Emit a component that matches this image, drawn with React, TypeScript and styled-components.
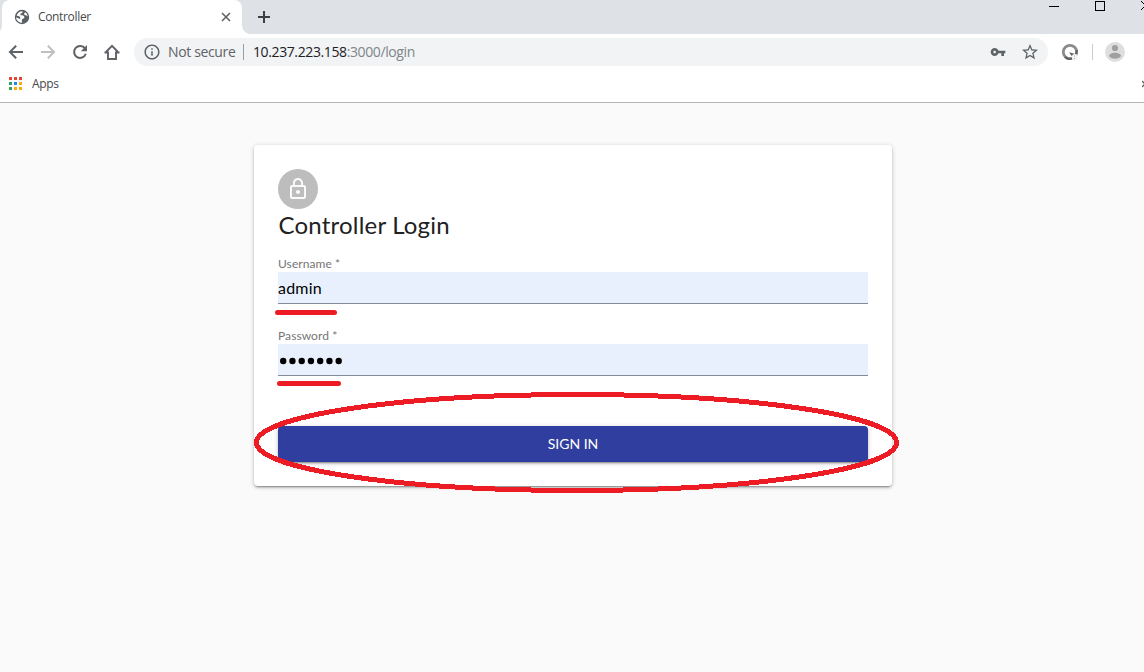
import React from 'react';
import styled, { createGlobalStyle, css } from 'styled-components';

const Global = createGlobalStyle`
  * { box-sizing: border-box; }
  html, body { margin: 0; padding: 0; overflow: hidden; background: #fafafa; }
`;

const Window = styled.div`
  position: relative;
  display: flex;
  flex-direction: column;
  width: 1144px;
  height: 672px;
  overflow: hidden;
  background: #fafafa;
  font-family: 'Open Sans', 'Noto Sans', sans-serif;
`;

const TabStrip = styled.div`
  display: flex;
  height: 34px;
  padding-left: 2px;
  background: #dee1e6;
`;

const Tab = styled.div`
  position: relative;
  display: flex;
  align-items: center;
  width: 240px;
  height: 34px;
  padding: 0 11px 0 12px;
  background: #fff;
  border-radius: 8px 8px 0 0;
  &::after, &::before {
    content: '';
    position: absolute;
    bottom: 0;
    width: 8px;
    height: 8px;
  }
  &::after { left: 100%; background: radial-gradient(circle at 100% 0, transparent 7.5px, #fff 8px); }
  &::before { right: 100%; background: radial-gradient(circle at 0 0, transparent 7.5px, #fff 8px); }
`;

const TabTitle = styled.span`
  flex: 1;
  margin-left: 8px;
  font-size: 12px;
  line-height: 16px;
  letter-spacing: -0.34px;
  color: #45494d;
`;

const NewTab = styled.div`
  display: flex;
  align-items: center;
  margin-left: 15px;
`;

const WindowButtons = styled.div`
  display: flex;
  align-items: flex-start;
  height: 12px;
  margin-left: auto;
`;

const Toolbar = styled.div`
  display: flex;
  align-items: center;
  height: 36px;
  padding-left: 8px;
  background: #fff;
`;

const NavButton = styled.div`
  display: flex;
  width: 16px;
  height: 16px;
  margin-right: 16px;
  &:nth-child(4) { margin-right: 14px; }
`;

const AddressBar = styled.div`
  display: flex;
  align-items: center;
  width: 914px;
  height: 28px;
  padding: 0 10px;
  border-radius: 14px;
  background: #f1f3f4;
`;

const Security = styled.span`
  width: 75px;
  margin-left: 8px;
  font-size: 14px;
  line-height: 20px;
  letter-spacing: -0.36px;
  white-space: nowrap;
  color: #5f6368;
`;

const Divider = styled.span<{ $color: string }>`
  width: 1px;
  height: 16px;
  background: ${(p) => p.$color};
`;

const Url = styled.span`
  flex: 1;
  margin-left: 9px;
  font-size: 14px;
  line-height: 20px;
  letter-spacing: -0.39px;
  color: #202124;
  span { color: #80868b; }
`;

const AddressIcons = styled.div`
  display: flex;
  gap: 16px;
`;

const Extensions = styled.div`
  display: flex;
  align-items: center;
  margin-left: 13px;
  gap: 12.5px;
`;

const Bookmarks = styled.div`
  display: flex;
  align-items: center;
  height: 33px;
  padding: 0 0 5px 9px;
  background: #fff;
  border-bottom: 1px solid #b6b4b6;
`;

const BookmarkLabel = styled.span`
  flex: 1;
  margin-left: 10px;
  font-size: 12px;
  line-height: 16px;
  letter-spacing: -0.3px;
  color: #45494d;
`;

const Page = styled.main`
  display: flex;
  flex: 1;
  justify-content: center;
  align-items: flex-start;
  padding: 42px 0 0 2px;
  font-family: Lato, sans-serif;
`;

const raised = css`
  box-shadow: 0 3px 1px -2px rgba(0, 0, 0, 0.2), 0 2px 2px rgba(0, 0, 0, 0.14), 0 1px 5px rgba(0, 0, 0, 0.2);
`;

const Card = styled.section`
  width: 638px;
  height: 341px;
  padding: 24px;
  background: #fff;
  border-radius: 4px;
  ${raised}
`;

const Avatar = styled.div`
  display: flex;
  align-items: center;
  justify-content: center;
  width: 40px;
  height: 40px;
  border-radius: 50%;
  background: #bdbdbd;
`;

const Title = styled.h1`
  margin: 0;
  padding-left: 0.5px;
  font-size: 24px;
  font-weight: 400;
  line-height: 32px;
  letter-spacing: 0.2px;
  color: #212121;
`;

const Field = styled.div`
  height: 48px;
  margin: 15px 0 24px;
  & + & { margin-top: 0; }
`;

const Label = styled.label`
  display: block;
  height: 16px;
  font-size: 12px;
  line-height: 15px;
  letter-spacing: 0.08px;
  color: #757575;
`;

const Value = styled.div`
  display: flex;
  align-items: center;
  height: 32px;
  padding: 1px 0 0;
  border-bottom: 1px solid #858b98;
  background: #e8f0fe;
  font-size: 16px;
  line-height: 20px;
  letter-spacing: 0.2px;
  color: #000;
`;

const Dots = styled.svg`
  margin-top: 2px;
`;

const SignIn = styled.button`
  display: block;
  width: 100%;
  height: 36px;
  margin-top: 50px;
  padding: 0;
  border: 0;
  border-radius: 4px;
  background: #303f9f;
  font: 400 14px/24px Lato, sans-serif;
  color: #fff;
  ${raised}
`;

const Markup = styled.svg`
  position: absolute;
  inset: 0;
  pointer-events: none;
`;

const Icon = ({ d, size = 16, color = '#5f6368', box = '0 0 24 24' }: { d: string; size?: number; color?: string; box?: string }) => (
  <svg width={size} height={size} viewBox={box} fill={color}><path d={d} /></svg>
);

const BACK = 'M22.500 10.500v3H6.500l6.800 6.800-2.100 2.100L.8 12 11.200 1.600l2.100 2.100-6.800 6.800z';
const FORWARD = 'M1.500 10.500v3h16l-6.800 6.800 2.100 2.100L23.200 12 12.800 1.600l-2.100 2.100 6.800 6.800z';
const INFO = 'M11 7h2v2h-2zm0 4h2v6h-2zm1-9C6.48 2 2 6.48 2 12s4.48 10 10 10 10-4.48 10-10S17.52 2 12 2zm0 18c-4.41 0-8-3.59-8-8s3.59-8 8-8 8 3.59 8 8-3.59 8-8 8z';
const KEY = 'M12.65 10C11.83 7.67 9.61 6 7 6c-3.31 0-6 2.69-6 6s2.69 6 6 6c2.61 0 4.83-1.67 5.65-4H17v4h4v-4h2v-4H12.65zM7 14c-1.1 0-2-.9-2-2s.9-2 2-2 2 .9 2 2-.9 2-2 2z';
const STAR = 'M22 9.24l-7.19-.62L12 2 9.19 8.63 2 9.24l5.46 4.73L5.82 21 12 17.27 18.18 21l-1.63-7.03L22 9.24zM12 15.4l-3.76 2.27 1-4.28-3.32-2.88 4.38-.38L12 6.1l1.71 4.04 4.38.38-3.32 2.88 1 4.28L12 15.4z';
const LOCK = 'M12 17c1.1 0 2-.9 2-2s-.9-2-2-2-2 .9-2 2 .9 2 2 2zm6-9h-1V6c0-2.76-2.24-5-5-5S7 3.24 7 6v2H6c-1.1 0-2 .9-2 2v10c0 1.1.9 2 2 2h12c1.1 0 2-.9 2-2V10c0-1.1-.9-2-2-2zM8.9 6c0-1.71 1.39-3.1 3.1-3.1s3.1 1.39 3.1 3.1v2H8.9V6zM18 20H6V10h12v10z';

const Globe = () => (
  <svg width="16" height="16" viewBox="0 0 16 16">
    <circle cx="8" cy="8" r="7.2" fill="#5a5f64" />
    <path d="M8.600 2.200 8.300 3.900 6.600 4.600 6.300 6.300h2.600l1.500 1.500-.2 1.500-1.600.4-.9 1.600.5 2.400C4.800 13.700 2.200 11.300 2.100 8.200l3.700 1.700.7-1-.9-1.400-3-.9C3.300 4 5.500 2.100 8.600 2.200z" fill="#fff" />
    <path d="M11.200 3.200 10 4.800l.6 1.200 2 .5 1 .9c0-1.700-.8-3.200-2.400-4.200z" fill="#fff" />
  </svg>
);

const APP_COLORS = ['#ea4335', '#ea4335', '#ea4335', '#34a060', '#1a88f5', '#fbab07', '#34a060', '#fbab07', '#fbab07'];

const AppsIcon = () => (
  <svg width="13" height="13" shapeRendering="crispEdges">
    {APP_COLORS.map((c, i) => <rect key={i} x={(i % 3) * 5} y={Math.floor(i / 3) * 5} width="3" height="3" fill={c} />)}
  </svg>
);

export default function App() {
  return (
    <Window>
      <Global />
      <TabStrip>
        <Tab>
          <Globe />
          <TabTitle>Controller</TabTitle>
          <svg width="10" height="10" stroke="#5f6368" strokeWidth="1.6"><path d="M1 1l8 8M9 1l-8 8" /></svg>
        </Tab>
        <NewTab>
          <svg width="14" height="14" stroke="#3c4043" strokeWidth="2"><path d="M7 1v12M1 7h12" /></svg>
        </NewTab>
        <WindowButtons>
          <svg width="95" height="12" fill="none" stroke="#000" shapeRendering="crispEdges">
            <path d="M0 6.500h10M46.500 1.500h9v9h-9z" />
            <path d="M92 1l9 9M92 10l9-9" shapeRendering="auto" />
          </svg>
        </WindowButtons>
      </TabStrip>
      <Toolbar>
        <NavButton><Icon d={BACK} /></NavButton>
        <NavButton><Icon d={FORWARD} color="#bdbfc1" /></NavButton>
        <NavButton>
          <svg width="16" height="16" viewBox="0 0 16 16" fill="none" stroke="#5f6368" strokeWidth="2">
            <path d="M13 4.400A6 6 0 1 0 13.800 9.800" />
            <path d="M15 1v6.200H8.800z" fill="#5f6368" stroke="none" />
          </svg>
        </NavButton>
        <NavButton>
          <svg width="16" height="16" viewBox="0 0 16 16" fill="none" stroke="#5f6368" strokeWidth="2">
            <path d="M2 8 8 1.900 14 8M.5 8.500H4V15h8V8.500h3.500" strokeWidth="1.900" />
          </svg>
        </NavButton>
        <AddressBar>
          <Icon d={INFO} box="1.4 1.4 21.2 21.2" />
          <Security>Not secure</Security>
          <Divider $color="#9a9da1" />
          <Url>10.237.223.158<span>:3000/login</span></Url>
          <AddressIcons>
            <Icon d={KEY} />
            <Icon d={STAR} box="2 2 20 20" />
          </AddressIcons>
        </AddressBar>
        <Extensions>
          <svg width="18" height="18" viewBox="0 0 18 18">
            <circle cx="9" cy="9" r="6.700" fill="none" stroke="#8b8b8b" strokeWidth="2.800" />
            <path d="M15.800 7a7 7 0 0 1-2 5.500M4 14a7 7 0 0 0 7 1.500M10.500 11l5 1.500-2 3z" fill="none" stroke="#606060" strokeWidth="2" />
            <circle cx="14" cy="14.300" r="3.200" fill="#f6f6f6" />
            <path d="M13 13h1M13 15.500h1" stroke="#aaa" />
          </svg>
          <Divider $color="#c9cbce" />
          <svg width="20" height="20" viewBox="0 0 20 20">
            <circle cx="10" cy="10" r="10" fill="#dedede" />
            <circle cx="10" cy="6" r="3.100" fill="#a0a0a0" />
            <path d="M4 14c0-2 3-3.300 6-3.300s6 1.300 6 3.300c-1 1.700-3.500 2.700-6 2.700S5 15.700 4 14z" fill="#a0a0a0" />
          </svg>
        </Extensions>
      </Toolbar>
      <Bookmarks>
        <AppsIcon />
        <BookmarkLabel>Apps</BookmarkLabel>
        <svg width="2" height="8" fill="none" stroke="#5f6368" strokeWidth="1.500"><path d="M0 1l3 3-3 3" /></svg>
      </Bookmarks>
      <Page>
        <Card>
          <Avatar><Icon d={LOCK} size={24} color="#fafafa" /></Avatar>
          <Title>Controller Login</Title>
          <Field>
            <Label>Username *</Label>
            <Value>admin</Value>
          </Field>
          <Field>
            <Label>Password *</Label>
            <Value>
              <Dots width="66" height="10">
                {Array.from({ length: 7 }, (_, i) => <circle key={i} cx={5.200 + i * 9.250} cy="5" r="3.200" />)}
              </Dots>
            </Value>
          </Field>
          <SignIn>SIGN IN</SignIn>
        </Card>
      </Page>
      <Markup width="1144" height="672" fill="none" stroke="#ed1c24" strokeWidth="5" strokeLinecap="round">
        <path d="M277.500 312.500H334.500M279.500 383.500H338.500" />
        <ellipse cx="576.500" cy="442.500" rx="320" ry="48" shapeRendering="crispEdges" />
      </Markup>
    </Window>
  );
}
